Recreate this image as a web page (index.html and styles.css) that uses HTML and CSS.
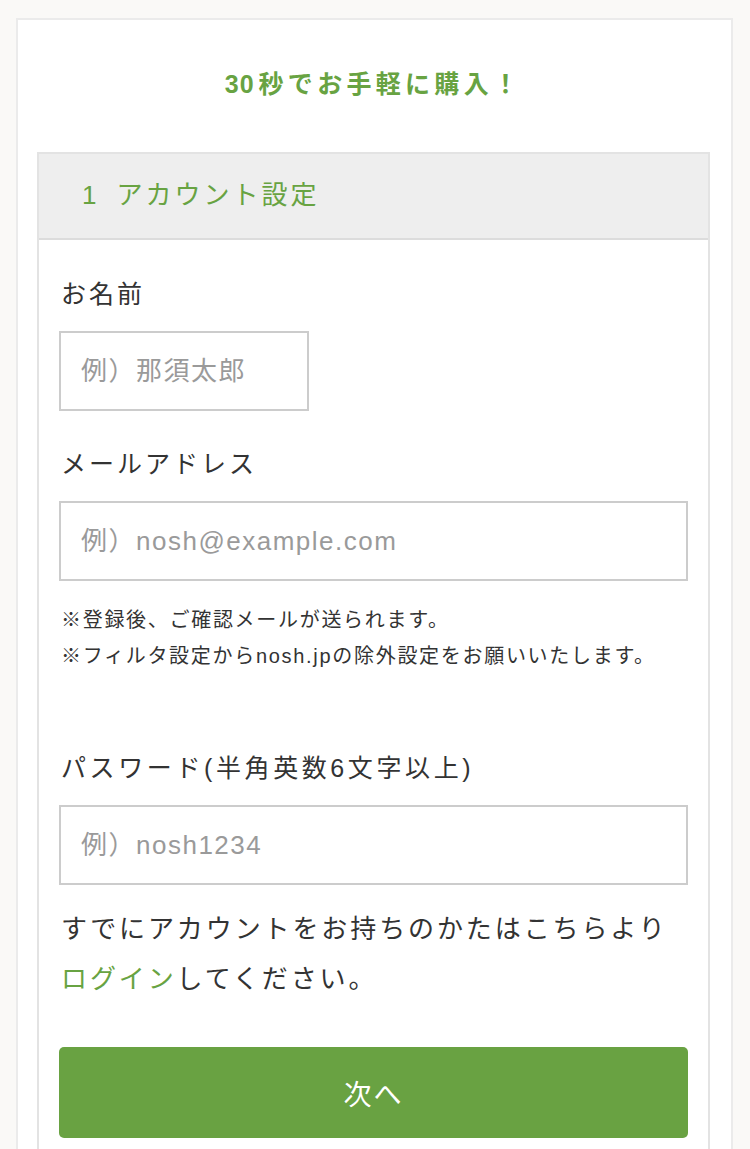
FILE: index.html
```html
<!DOCTYPE html>
<html lang="ja">
<head>
<meta charset="utf-8">
<title>アカウント設定</title>
<link rel="stylesheet" href="styles.css">
</head>
<body>
<main class="card">
  <h1 class="title"><span class="title-num">30</span>秒でお手軽に購入！</h1>
  <section class="step">
    <h2 class="step-head"><span class="step-num">1</span>アカウント設定</h2>
    <div class="step-body">
      <label class="label label-first" for="name">お名前</label>
      <input class="field field-short" id="name" type="text" placeholder="例）那須太郎">

      <label class="label" for="mail">メールアドレス</label>
      <input class="field" id="mail" type="email" placeholder="例）nosh@example.com">
      <p class="notes">※登録後、ご確認メールが送られます。<br>※フィルタ設定からnosh.jpの除外設定をお願いいたします。</p>

      <label class="label label-pass" for="pass">パスワード(半角英数6文字以上)</label>
      <input class="field" id="pass" type="password" placeholder="例）nosh1234">

      <p class="login">すでにアカウントをお持ちのかたはこちらより<br><a class="login-link" href="#">ログイン</a>してください。</p>

      <button class="next" type="button">次へ</button>
    </div>
  </section>
</main>
</body>
</html>
```

FILE: styles.css
```css
* {
  box-sizing: border-box;
}

html, body {
  margin: 0;
  padding: 0;
}

body {
  background: #faf9f7;
  font-family: "Liberation Sans", "Noto Sans CJK JP", sans-serif;
  color: #333333;
  padding: 18px 0 0 16px;
}

.card {
  width: 717px;
  background: #ffffff;
  border: 2px solid #ebebeb;
  border-bottom: none;
  padding: 46px 21px 0 19px;
  min-height: 1200px;
}

.title {
  margin: 0;
  text-align: center;
  font-size: 25px;
  line-height: 36px;
  font-weight: bold;
  letter-spacing: 4.3px;
  color: #68a342;
}

.title-num {
  letter-spacing: 1px;
  margin-right: 4px;
}

.step {
  margin-top: 50px;
  border: 2px solid #e3e3e3;
  border-bottom: none;
}

.step-head {
  margin: 0;
  background: #eeeeee;
  border-bottom: 2px solid #dcdcdc;
  padding: 22px 0 24px 43px;
  font-size: 26px;
  line-height: 38px;
  font-weight: normal;
  letter-spacing: 3px;
  color: #68a342;
}

.step-num {
  margin-right: 20px;
  letter-spacing: 0;
}

.step-body {
  padding: 36px 20px 40px 20px;
  display: flex;
  flex-direction: column;
  align-items: flex-start;
}

.label {
  display: block;
  font-size: 25px;
  line-height: 36px;
  letter-spacing: 3px;
  color: #333333;
  margin-top: 35px;
  margin-left: 2px;
}

.label-first {
  margin-top: 0;
}

.label-pass {
  margin-top: 76px;
  letter-spacing: 3.6px;
}

.field {
  display: block;
  width: 100%;
  height: 80px;
  margin-top: 19px;
  border: 2px solid #cccccc;
  border-radius: 0;
  background: #ffffff;
  padding: 0 20px;
  font-family: "Liberation Sans", "Noto Sans CJK JP", sans-serif;
  font-size: 26px;
  letter-spacing: 1.5px;
  color: #333333;
  outline: none;
}

.field-short {
  width: 250px;
}

.field::placeholder {
  color: #9a9a9a;
}

.notes {
  margin: 21px 0 0 2px;
  font-size: 20px;
  line-height: 36px;
  letter-spacing: 1.7px;
  color: #333333;
}

.login {
  margin: 19px 0 0 2px;
  font-size: 26px;
  line-height: 50px;
  letter-spacing: 2.9px;
  color: #333333;
}

.login-link {
  color: #68a342;
  text-decoration: none;
}

.next {
  margin-top: 43px;
  width: 100%;
  height: 91px;
  border: none;
  border-radius: 5px;
  background: #69a242;
  color: #ffffff;
  font-family: "Liberation Sans", "Noto Sans CJK JP", sans-serif;
  font-size: 28px;
  letter-spacing: 2px;
  cursor: pointer;
}
```
